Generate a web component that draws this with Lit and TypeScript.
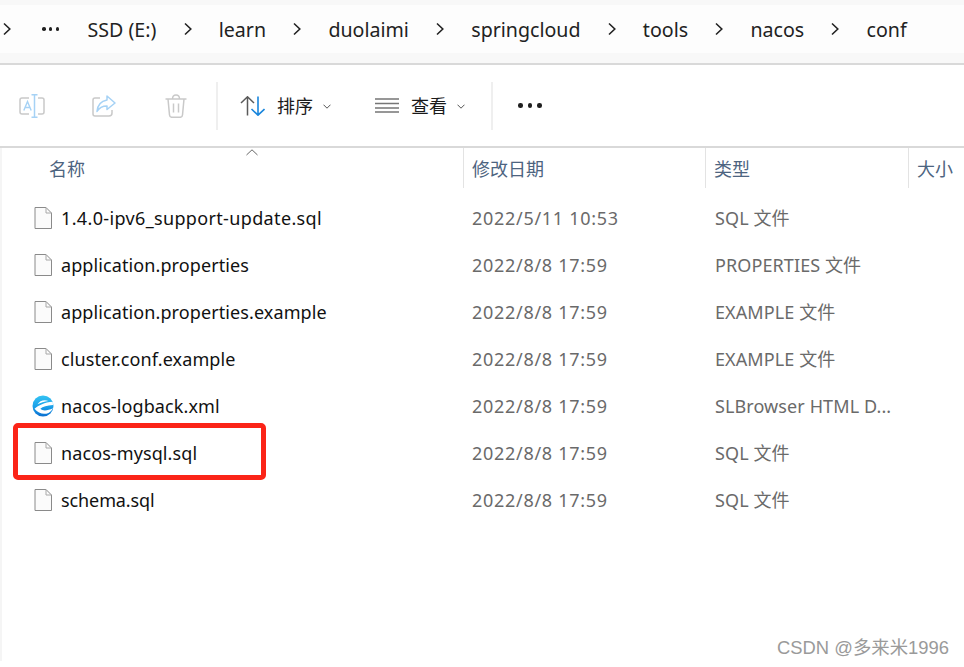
import { LitElement, html, css } from "lit";
import { customElement } from "lit/decorators.js";

const crumbs = ["SSD (E:)", "learn", "duolaimi", "springcloud", "tools", "nacos", "conf"];
const rows = [
  ["1.4.0-ipv6_support-update.sql", "2022/5/11 10:53", "SQL 文件", "file", "wide"],
  ["application.properties", "2022/8/8 17:59", "PROPERTIES 文件", "file", ""],
  ["application.properties.example", "2022/8/8 17:59", "EXAMPLE 文件", "file", ""],
  ["cluster.conf.example", "2022/8/8 17:59", "EXAMPLE 文件", "file", ""],
  ["nacos-logback.xml", "2022/8/8 17:59", "SLBrowser HTML D...", "edge", ""],
  ["nacos-mysql.sql", "2022/8/8 17:59", "SQL 文件", "file", ""],
  ["schema.sql", "2022/8/8 17:59", "SQL 文件", "file", "tight"],
];

const chevron = html`<svg class="chev" width="8" height="14" viewBox="0 0 8 14"><path d="M1 1.5 6.8 7 1 12.5" fill="none" stroke="#222" stroke-width="1.6"/></svg>`;
const caret = html`<svg class="caret" width="8" height="5" viewBox="0 0 8 5"><path d="M.5.7 4 4.2 7.5.7" fill="none" stroke="#555" stroke-width="1"/></svg>`;
const fileIcon = html`<svg class="ficon" width="18" height="22" viewBox="0 0 18 22"><path d="M1 .5H12L17.5 6V21.5H1Z" fill="#fbfbfb" stroke="#8a8a8a"/><path d="M12 .5V6H17.5" fill="none" stroke="#a8a8a8"/></svg>`;
const edgeIcon = html`<svg class="ficon edge" width="22" height="22" viewBox="0 0 22 22">
  <defs>
    <linearGradient id="eg" x1="0" y1="0" x2="0" y2="1"><stop offset="0" stop-color="#35c3f3"/><stop offset=".55" stop-color="#1a9fe8"/><stop offset="1" stop-color="#0b6fd0"/></linearGradient>
  </defs>
  <circle cx="11" cy="11" r="10.5" fill="url(#eg)"/>
  <path d="M2.5 13.8C6.5 10.3 12.5 7.4 20.8 6.8L21 10C15 10.3 10.8 11.6 8.3 13.7C11 16.3 15.5 15.7 21 13.2C19.5 16 18 17 16.5 18C11.5 20 6.5 18.5 2.5 13.8Z" fill="#fff"/>
  <path d="M5.5 9.3C7.5 5.8 12 4.1 16.3 5.9C12.3 6.3 8.7 7.5 5.5 9.3Z" fill="#fff"/>
</svg>`;

@customElement("app-root")
export class AppRoot extends LitElement {
  static styles = css`
    :host { display: block; width: 964px; height: 667px; position: relative; overflow: hidden; background: #fff;
      font-family: "Noto Sans", "Noto Sans CJK SC", sans-serif; color: #1a1a1a; }
    .top { background: #f8f8f8; padding: 5px 0 10px; border-bottom: 2px solid #d9d9d9; }
    .crumbs { height: 48px; background: #fdfdfd; display: flex; align-items: center; font-size: 19.6px; color: #222; padding-left: 3px; white-space: nowrap; }
    .crumbs span.t { margin-right: 27.2px; }
    .chev { flex: none; margin-right: 27.2px; }
    .chev.first { margin-right: 31px; }
    .dots { width: 17px; height: 4px; margin-right: 28.5px; display: flex; justify-content: space-between; }
    .dots i { width: 3.5px; height: 3.5px; border-radius: 50%; background: #222; }
    .tools { box-sizing: border-box; border-bottom: 2px solid #d9d9d9; display: flex; align-items: center; height: 83px; }
    .ico { display: flex; justify-content: center; }
    .w64 { width: 64px; }
    .w80 { width: 80px; }
    .sep { width: 2px; height: 48px; background: #efefef; }
    .sep1 { margin-left: 8px; }
    .sep2 { margin-left: 26px; }
    .btn { display: flex; align-items: center; font-size: 18px; color: #1a1a1a; line-height: 24px; }
    .sort-btn { margin-left: 22px; }
    .view-btn { margin-left: 44px; }
    .btn svg.big { margin-right: 12px; }
    .caret { margin-left: 10px; margin-top: 1px; }
    .more { display: flex; gap: 5px; margin-left: 25px; }
    .more i { width: 4.5px; height: 4.5px; border-radius: 50%; background: #1f1f1f; }
    .head { height: 40px; box-sizing: border-box; display: grid; grid-template-columns: 461px 242px 203px 1fr; position: relative; font-size: 18px; color: #4d6480; border-left: 2px solid #f5f5f5; line-height: 24px; }
    .head > div { display: flex; align-items: center; padding-left: 8px; padding-top: 1px; border-left: 1px solid #e3e3e3; }
    .head > div:first-child { border-left: none; padding-left: 47px; }
    .sort { position: absolute; left: 244px; top: 1px; }
    .list { border-left: 2px solid #f5f5f5; padding-top: 6px; height: 473px; box-sizing: border-box; }
    .row { height: 47px; display: grid; grid-template-columns: 461px 243px 1fr; align-items: center; font-size: 18px; line-height: 24px; color: #6a6a6a; white-space: nowrap; }
    .name { display: flex; align-items: center; color: #111; padding-left: 32px; height: 100%; letter-spacing: .1px; }
    .name.wide { letter-spacing: .35px; }
    .name.tight { letter-spacing: -.1px; }
    .ficon { flex: none; width: 18px; margin-right: 9px; }
    .ficon.edge { width: 22px; margin-left: -2px; margin-right: 7px; }
    .date { padding-left: 9px; letter-spacing: .7px; }
    .type { padding-left: 9px; letter-spacing: .1px; }
    .hl { position: absolute; left: 13px; top: 423px; width: 253px; height: 57px; box-sizing: border-box; border: 5px solid #fb2418; border-radius: 5px; }
    .mark { position: absolute; right: 15px; bottom: 8px; font-size: 18.4px; color: #9a9a9a; font-family: "Liberation Sans", "Noto Sans CJK SC", sans-serif; }
  `;

  render() {
    return html`
      <div class="top">
        <div class="crumbs">
          <svg class="chev first" width="8" height="14" viewBox="0 0 8 14"><path d="M1 1.5 6.8 7 1 12.5" fill="none" stroke="#222" stroke-width="1.6"/></svg>
          <span class="dots"><i></i><i></i><i></i></span>
          ${crumbs.map((c, i) => html`<span class="t">${c}</span>${i < crumbs.length - 1 ? chevron : ""}`)}
        </div>
      </div>
      <div class="tools">
        <div class="ico w64">
          <svg width="26" height="24" viewBox="0 0 26 24"><path d="M10 4H3Q1 4 1 6V18Q1 20 3 20H10M19 4H23Q25 4 25 6V18Q25 20 23 20H19" fill="none" stroke="#c9c9c9" stroke-width="1.5"/><path d="M15.5 .7V23.3M12.5 .7H18.5M12.5 23.3H18.5" fill="none" stroke="#a6d2f5" stroke-width="1.5"/><path d="M4.8 16.5 8.5 7.5 12.2 16.5M6 13.5H11" fill="none" stroke="#a6d2f5" stroke-width="1.4"/></svg>
        </div>
        <div class="ico w80">
          <svg width="24" height="24" viewBox="0 0 24 24"><path d="M8 4H3Q1 4 1 6V20Q1 22 3 22H17Q20 22 20 19V16" fill="none" stroke="#c9c9c9" stroke-width="1.5"/><path d="M15 2 23 9 15 15.5V12C10 12 7 14 5 17.5C5.5 11 9.5 7 15 6Z" fill="none" stroke="#a6d2f5" stroke-width="1.5" stroke-linejoin="round"/></svg>
        </div>
        <div class="ico w64">
          <svg width="22" height="24" viewBox="0 0 22 24"><path d="M.5 5H21.5M7.5 5Q7.5 1 11 1T14.5 5M3 5 4.5 21Q4.7 23.3 7 23.3H15Q17.3 23.3 17.5 21L19 5M8.5 9.5V18.5M13.5 9.5V18.5" fill="none" stroke="#c9c9c9" stroke-width="1.5"/></svg>
        </div>
        <div class="sep sep1"></div>
        <div class="btn sort-btn">
          <svg class="big" width="25" height="20" viewBox="0 0 25 20"><path d="M1 7 7.5 .8 14 7M7.5 1V19.5" fill="none" stroke="#5a5a5a" stroke-width="1.5"/><path d="M11.5 13 18 19.2 24.5 13M18 .5V19" fill="none" stroke="#1a86dc" stroke-width="1.6"/></svg>
          排序${caret}
        </div>
        <div class="btn view-btn">
          <svg class="big" width="24" height="15" viewBox="0 0 24 15"><path d="M0 1H24M0 5.5H24M0 10H24M0 14H24" stroke="#767676" stroke-width="1.3"/></svg>
          查看${caret}
        </div>
        <div class="sep sep2"></div>
        <div class="more"><i></i><i></i><i></i></div>
      </div>
      <div class="head">
        <div>名称</div><div>修改日期</div><div>类型</div><div>大小</div>
        <svg class="sort" width="12" height="7" viewBox="0 0 12 7"><path d="M.5 6 6 .8 11.5 6" fill="none" stroke="#666" stroke-width="1"/></svg>
      </div>
      <div class="list">
        ${rows.map(r => html`<div class="row">
          <div class="name ${r[4]}">${r[3] === "edge" ? edgeIcon : fileIcon}<span>${r[0]}</span></div>
          <div class="date">${r[1]}</div>
          <div class="type">${r[2]}</div>
        </div>`)}
      </div>
      <div class="hl"></div>
      <div class="mark">CSDN @多来米1996</div>
    `;
  }
}
